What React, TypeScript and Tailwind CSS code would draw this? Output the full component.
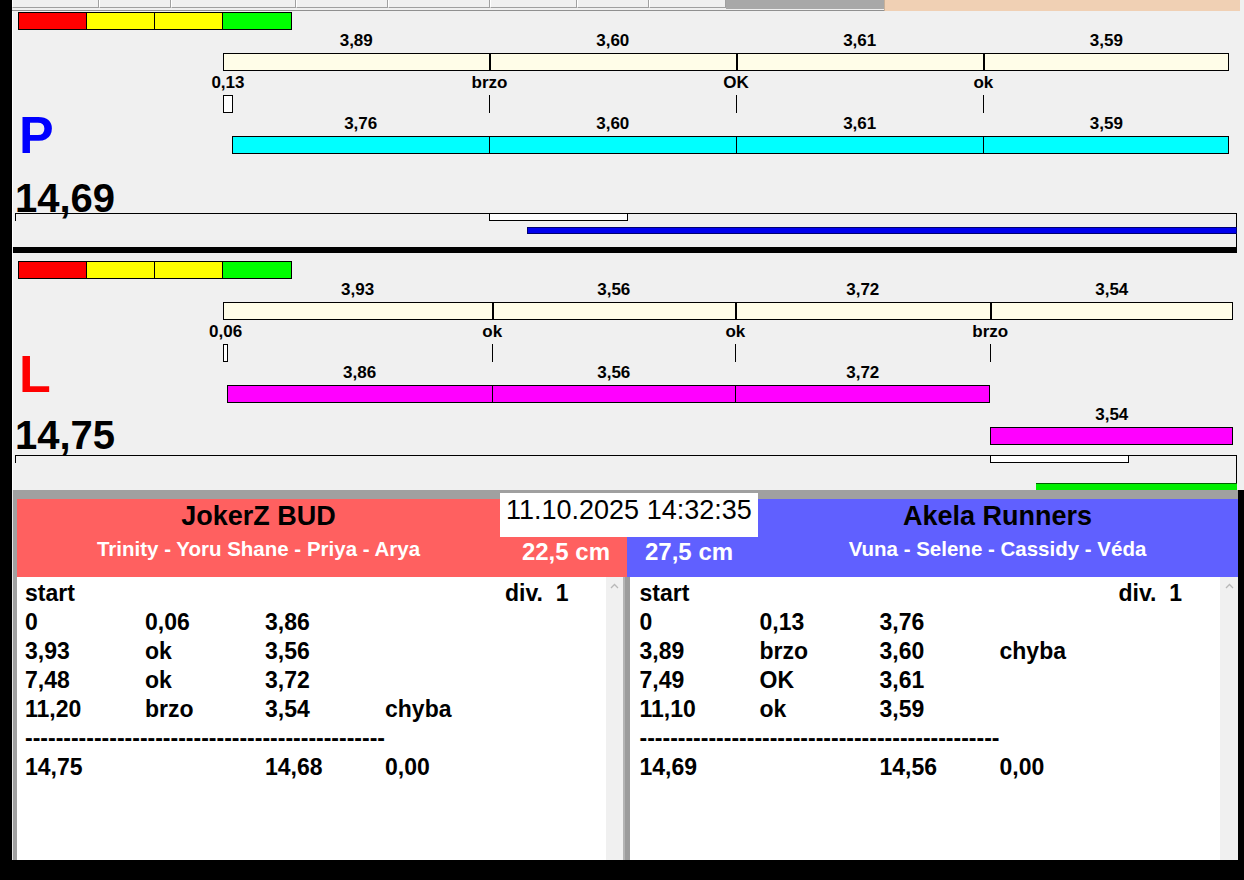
import React from 'react';

// timing chart scale: one second of the run = 68.5px, time 0 sits at x=210 inside a lane
const PX_PER_S = 68.5;
const ORIGIN = 210;
const at = (t: number) => ORIGIN + t * PX_PER_S;

type Run = { from: number; cuts: number[]; to: number; labels: string[]; barTop: string; labelTop: string };

interface LaneCfg {
  letter: string;
  letterCls: string;
  total: string;
  totalCls: string;
  heightCls: string;
  padCls: string;
  ref: number[];
  refLabels: string[];
  refLabelTop: string;
  refTop: string;
  marks: string[];
  markLabelTop: string;
  tickTop: string;
  reaction: number;
  runColor: string;
  runs: Run[];
  boxTop: string;
  windowStart: number;
  tailStart: number;
  tailCls: string;
}

const RIGHT_LANE: LaneCfg = {
  letter: 'P',
  letterCls: 'mt-[79px] text-[#0000ff]',
  total: '14,69',
  totalCls: 'mt-[17px]',
  heightCls: 'h-[236px]',
  padCls: 'pt-[1px]',
  ref: [0, 3.89, 7.49, 11.1, 14.69],
  refLabels: ['3,89', '3,60', '3,61', '3,59'],
  refLabelTop: 'top-[29px]',
  refTop: 'top-[42px]',
  marks: ['0,13', 'brzo', 'OK', 'ok'],
  markLabelTop: 'top-[71px]',
  tickTop: 'top-[84px]',
  reaction: 0.13,
  runColor: 'bg-[#00ffff]',
  runs: [
    { from: 0.13, cuts: [3.89, 7.49, 11.1], to: 14.69, labels: ['3,76', '3,60', '3,61', '3,59'], barTop: 'top-[125px]', labelTop: 'top-[112px]' },
  ],
  boxTop: 'top-[202px]',
  windowStart: 3.89,
  tailStart: 4.44,
  tailCls: 'top-[216px] h-[7px] bg-[#0000ee] border border-[#000070]',
};

const LEFT_LANE: LaneCfg = {
  letter: 'L',
  letterCls: 'mt-[69px] text-[#ff0000]',
  total: '14,75',
  totalCls: 'mt-[15px]',
  heightCls: 'h-[237px]',
  padCls: 'pt-[8px]',
  ref: [0, 3.93, 7.48, 11.2, 14.75],
  refLabels: ['3,93', '3,56', '3,72', '3,54'],
  refLabelTop: 'top-[36px]',
  refTop: 'top-[49px]',
  marks: ['0,06', 'ok', 'ok', 'brzo'],
  markLabelTop: 'top-[78px]',
  tickTop: 'top-[91px]',
  reaction: 0.06,
  runColor: 'bg-[#ff00ff]',
  runs: [
    { from: 0.06, cuts: [3.93, 7.48], to: 11.2, labels: ['3,86', '3,56', '3,72'], barTop: 'top-[132px]', labelTop: 'top-[119px]' },
    { from: 11.2, cuts: [], to: 14.75, labels: ['3,54'], barTop: 'top-[174px]', labelTop: 'top-[161px]' },
  ],
  boxTop: 'top-[202px]',
  windowStart: 11.2,
  tailStart: 11.87,
  tailCls: 'top-[230px] h-[8px] bg-[#00ee00] border-t border-[#006000]',
};

function Label({ x, top, children }: { x: number; top: string; children: React.ReactNode }) {
  return (
    <div
      className={`absolute ${top} -translate-x-1/2 -translate-y-1/2 whitespace-nowrap text-[17px] font-bold leading-none`}
      style={{ left: x }}
    >
      {children}
    </div>
  );
}

function Bar({ from, cuts, to, top, color, cut }: { from: number; cuts: number[]; to: number; top: string; color: string; cut: string }) {
  return (
    <div className={`absolute ${top} h-[18px] border border-black ${color}`} style={{ left: at(from), width: at(to) - at(from) }}>
      {cuts.map(t => (
        <div key={t} className={`absolute top-0 bottom-0 ${cut} bg-black`} style={{ left: (t - from) * PX_PER_S - 1 }} />
      ))}
    </div>
  );
}

function Lane({ lane }: { lane: LaneCfg }) {
  const end = lane.ref[lane.ref.length - 1];
  const inner = lane.ref.slice(1, -1);
  return (
    <div className={`relative shrink-0 overflow-hidden border-l border-white ${lane.heightCls}`}>
      <div className={`flex flex-col items-start ${lane.padCls}`}>
        <div className="ml-[5px] grid h-[18px] w-[274px] grid-cols-4 divide-x divide-black border border-black">
          <div className="bg-[#ff0000]" />
          <div className="bg-[#ffff00]" />
          <div className="bg-[#ffff00]" />
          <div className="bg-[#00ff00]" />
        </div>
        <div className={`ml-[6px] text-[52px] font-bold leading-none ${lane.letterCls}`}>{lane.letter}</div>
        <div className={`ml-[2px] text-[40px] font-bold leading-none ${lane.totalCls}`}>{lane.total}</div>
      </div>

      {/* reference (opponent) splits */}
      {lane.refLabels.map((s, i) => (
        <Label key={i} x={(at(lane.ref[i]) + at(lane.ref[i + 1])) / 2} top={lane.refLabelTop}>{s}</Label>
      ))}
      <Bar from={0} cuts={inner} to={end} top={lane.refTop} color="bg-[#fffde8]" cut="w-[2px]" />

      {/* changeover marks */}
      <Label x={at(0) + (lane.reaction * PX_PER_S + 1) / 2} top={lane.markLabelTop}>{lane.marks[0]}</Label>
      {inner.map((t, i) => (
        <Label key={t} x={at(t)} top={lane.markLabelTop}>{lane.marks[i + 1]}</Label>
      ))}
      <div
        className={`absolute ${lane.tickTop} h-[18px] border border-black bg-white`}
        style={{ left: at(0), width: lane.reaction * PX_PER_S + 1 }}
      />
      {inner.map(t => (
        <div key={t} className={`absolute ${lane.tickTop} h-[18px] w-px bg-black`} style={{ left: at(t) }} />
      ))}

      {/* own splits */}
      {lane.runs.map((run, r) => {
        const pts = [run.from, ...run.cuts, run.to];
        return (
          <React.Fragment key={r}>
            {run.labels.map((s, i) => (
              <Label key={i} x={(at(pts[i]) + at(pts[i + 1])) / 2} top={run.labelTop}>{s}</Label>
            ))}
            <Bar from={run.from} cuts={run.cuts} to={run.to} top={run.barTop} color={lane.runColor} cut="w-px" />
          </React.Fragment>
        );
      })}

      {/* progress box */}
      <div className={`absolute left-[2px] right-[1px] bottom-0 border-t border-r border-black ${lane.boxTop}`} />
      <div className={`absolute left-[2px] h-[8px] w-px bg-black ${lane.boxTop}`} />
      <div
        className={`absolute h-[8px] border border-black bg-white ${lane.boxTop}`}
        style={{ left: at(lane.windowStart), width: 2 * PX_PER_S + 2 }}
      />
      <div className={`absolute right-[1px] ${lane.tailCls}`} style={{ left: at(lane.tailStart) }} />
    </div>
  );
}

function TabStrip() {
  const tabs = [87, 72, 125, 92, 102, 87, 72, 77];
  return (
    <div className="flex h-[11px] shrink-0">
      <div className="w-[12px] bg-black" />
      <div className="flex w-[872px] border-b border-[#909090] bg-[#f0f0f0]">
        {tabs.map((w, i) => (
          <div key={i} className="h-[8px] border-r border-b border-[#a0a0a0] border-l border-l-white" style={{ width: w }} />
        ))}
        <div className="h-[9px] flex-1 bg-[#a8a8a8]" />
      </div>
      <div className="w-[356px] bg-[#f0d0b4] border-l border-[#c8b098]" />
      <div className="flex-1 bg-[#f0f0f0]" />
    </div>
  );
}

function Chevron() {
  return (
    <svg width="9" height="6" viewBox="0 0 9 6" className="mx-auto mt-[6px]">
      <path d="M1 5 L4.5 1.5 L8 5" fill="none" stroke="#b8b8b8" strokeWidth="1.3" />
    </svg>
  );
}

type Row = [string, string, string, string];

function ResultList({ rows, total, padCls, startCls }: { rows: Row[]; total: Row; padCls: string; startCls: string }) {
  return (
    <div className={`flex-1 bg-white pt-[2px] text-[23px] font-bold leading-[29px] ${padCls}`}>
      <div className="flex">
        <span className={startCls}>start</span>
        <span className="whitespace-pre">div.  1</span>
      </div>
      {rows.map((r, i) => (
        <div key={i} className="grid grid-cols-[120px_120px_120px_120px]">
          {r.map((c, j) => <span key={j}>{c}</span>)}
        </div>
      ))}
      <div className="whitespace-pre">{'-'.repeat(47)}</div>
      <div className="grid grid-cols-[120px_120px_120px_120px]">
        {total.map((c, j) => <span key={j}>{c}</span>)}
      </div>
    </div>
  );
}

function Results() {
  return (
    <div className="relative flex h-[370px] shrink-0 flex-col border-l border-[#e4e4e4] bg-[#a0a0a0] pt-[9px] pl-[4px]">
      <div className="flex h-[78px] shrink-0">
        <div className="flex w-[610px] bg-[#ff6060]">
          <div className="flex w-[483px] flex-col items-center">
            <div className="mt-[2px] text-[27px] font-bold leading-[30px] text-black">JokerZ BUD</div>
            <div className="mt-[6px] whitespace-nowrap text-[20.5px] font-bold leading-[24px] text-white">Trinity - Yoru Shane - Priya - Arya</div>
          </div>
          <div className="flex flex-1 items-end justify-end pr-[17px] pb-[11px]">
            <span className="text-[24px] font-bold leading-[28px] text-white">22,5 cm</span>
          </div>
        </div>
        <div className="flex w-[611px] bg-[#6060ff]">
          <div className="flex w-[130px] items-end pl-[18px] pb-[11px]">
            <span className="text-[24px] font-bold leading-[28px] text-white">27,5 cm</span>
          </div>
          <div className="flex flex-1 flex-col items-center">
            <div className="mt-[2px] text-[27px] font-bold leading-[30px] text-black">Akela Runners</div>
            <div className="mt-[6px] whitespace-nowrap text-[20.5px] font-bold leading-[24px] text-white">Vuna - Selene - Cassidy - Véda</div>
          </div>
        </div>
      </div>

      <div className="flex min-h-0 flex-1">
        <ResultList
          padCls="pl-[8px]"
          startCls="w-[480px]"
          rows={[
            ['0', '0,06', '3,86', ''],
            ['3,93', 'ok', '3,56', ''],
            ['7,48', 'ok', '3,72', ''],
            ['11,20', 'brzo', '3,54', 'chyba'],
          ]}
          total={['14,75', '', '14,68', '0,00']}
        />
        <div className="w-[17px] bg-[#f0f0f0]"><Chevron /></div>
        <div className="w-[7px] border-l-2 border-[#b4b4b4] bg-[#9c9c9c]" />
        <ResultList
          padCls="pl-[10px]"
          startCls="w-[479px]"
          rows={[
            ['0', '0,13', '3,76', ''],
            ['3,89', 'brzo', '3,60', 'chyba'],
            ['7,49', 'OK', '3,61', ''],
            ['11,10', 'ok', '3,59', ''],
          ]}
          total={['14,69', '', '14,56', '0,00']}
        />
        <div className="w-[18px] bg-[#f0f0f0]"><Chevron /></div>
      </div>

      {/* timestamp overlaps both team headers */}
      <div className="absolute left-[487px] top-[3px] h-[44px] w-[258px] bg-white pl-[6px] text-[27px] leading-[34px] text-black">
        11.10.2025 14:32:35
      </div>
    </div>
  );
}

export default function App() {
  return (
    <div className="flex h-[880px] w-[1244px] flex-col overflow-hidden bg-[#f0f0f0] font-['Liberation_Sans',Arial,sans-serif] text-black">
      <TabStrip />
      <div className="flex min-h-0 flex-1">
        <div className="w-[12px] bg-black" />
        <div className="flex w-[1226px] flex-col">
          <Lane lane={RIGHT_LANE} />
          <div className="mx-[1px] h-[6px] shrink-0 bg-black" />
          <Lane lane={LEFT_LANE} />
          <Results />
        </div>
        <div className="flex w-[6px] flex-col">
          <div className="h-[479px]" />
          <div className="flex-1 bg-black" />
        </div>
      </div>
      <div className="h-[20px] shrink-0 bg-black" />
    </div>
  );
}
